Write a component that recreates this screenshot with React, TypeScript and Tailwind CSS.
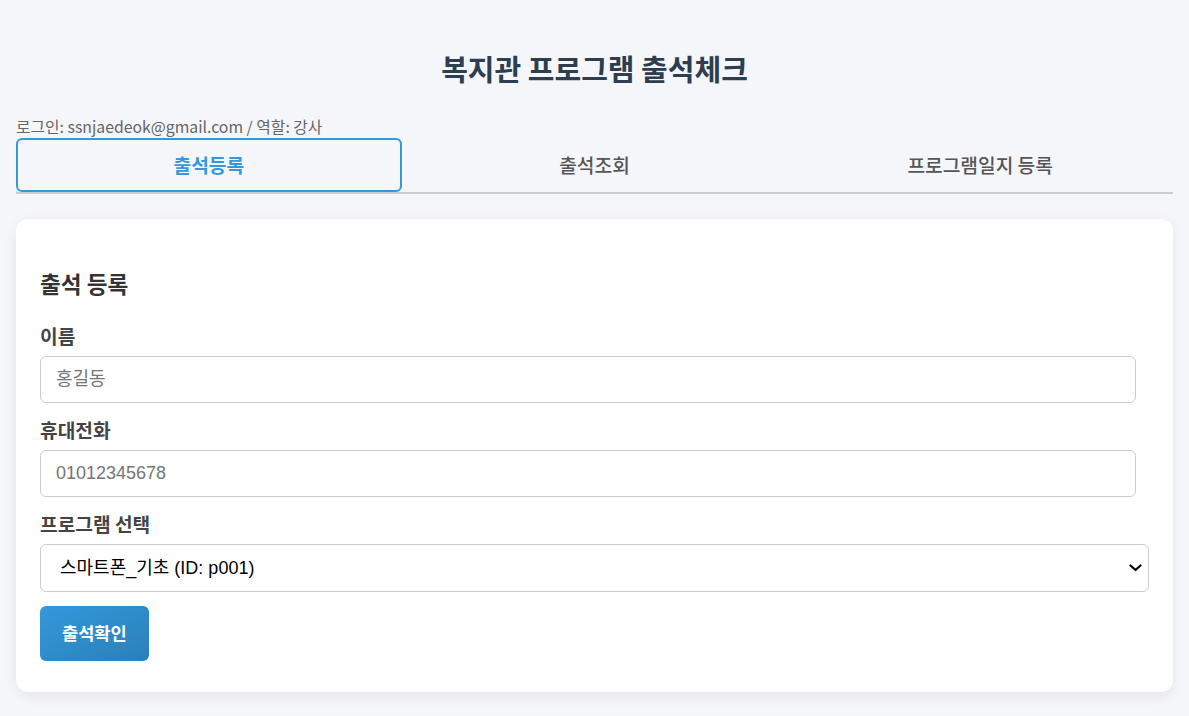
const TABS = ["출석등록", "출석조회", "프로그램일지 등록"];

function Field({
  label,
  placeholder,
}: {
  label: string;
  placeholder: string;
}) {
  return (
    <div className="mt-[15px] first:mt-0">
      <label className="mb-2 block text-[19.2px] font-bold leading-[24px] text-[#444]">
        {label}
      </label>
      <input
        type="text"
        placeholder={placeholder}
        className="h-[47px] w-[calc(100%-13px)] rounded-md border border-[#ccc] bg-white px-[15px] font-['Liberation_Sans','Noto_Sans_CJK_KR',sans-serif] text-[18px] text-[#333] outline-none placeholder:text-[#757575]"
      />
    </div>
  );
}

export default function App() {
  return (
    <div className="min-h-screen bg-[#f5f6fa] px-4 pt-[48px] pb-6 font-['Noto_Sans_CJK_KR','Noto_Sans',sans-serif]">
      <h1 className="text-center text-[29px] font-bold leading-[40px] text-[#2c3e50]">
        복지관 프로그램 출석체크
      </h1>

      <p className="mt-[29px] text-[15.8px] leading-[20px] text-[#666]">
        로그인: ssnjaedeok@gmail.com / 역할: 강사
      </p>

      <div className="mt-px grid grid-cols-3 border-b-2 border-[#ccc]">
        {TABS.map((tab, i) => (
          <button
            key={tab}
            className={`h-[54px] rounded-md text-[19.2px] ${
              i === 0
                ? "border-2 border-[#3498db] font-bold text-[#3498db]"
                : "font-medium text-[#555]"
            }`}
          >
            {tab}
          </button>
        ))}
      </div>

      <div className="mt-[25px] rounded-xl bg-white px-6 pt-[51px] pb-[31px] shadow-[0_4px_14px_rgba(0,0,0,0.07)]">
        <h3 className="mb-[26px] text-[22.6px] font-bold leading-[28px] text-[#333]">
          출석 등록
        </h3>

        <Field label="이름" placeholder="홍길동" />
        <Field label="휴대전화" placeholder="01012345678" />

        <div className="mt-[15px]">
          <label className="mb-2 block text-[19.2px] font-bold leading-[24px] text-[#444]">
            프로그램 선택
          </label>
          <div className="relative">
            <select className="h-[48px] w-full appearance-none rounded-md border border-[#ccc] bg-white px-[19px] font-['Liberation_Sans','Noto_Sans_CJK_KR',sans-serif] text-[18px] text-black outline-none">
              <option>스마트폰_기초 (ID: p001)</option>
            </select>
            <svg
              className="pointer-events-none absolute right-[7px] top-[20px]"
              width="13"
              height="8"
              viewBox="0 0 13 8"
              fill="none"
              stroke="black"
              strokeWidth="2.2"
              strokeLinecap="round"
              strokeLinejoin="round"
            >
              <polyline points="1.5 1.5 6.5 6 11.5 1.5" />
            </svg>
          </div>
        </div>

        <button className="mt-[14px] h-[55px] rounded-md bg-gradient-to-br from-[#3498db] to-[#2980b9] px-[22px] text-[17.6px] font-bold text-white">
          출석확인
        </button>
      </div>
    </div>
  );
}
